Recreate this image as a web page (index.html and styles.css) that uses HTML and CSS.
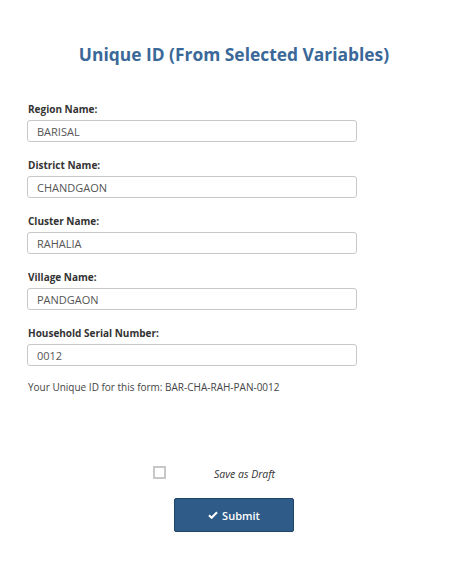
FILE: index.html
```html
<!DOCTYPE html>
<html>
<head>
<meta charset="utf-8">
<link rel="stylesheet" href="styles.css">
</head>
<body>
<div class="page">
  <h1 class="title">Unique ID (From Selected Variables)</h1>
  <form class="form">
    <div class="field">
      <label class="label">Region Name:</label>
      <input class="input" type="text" value="BARISAL">
    </div>
    <div class="field">
      <label class="label">District Name:</label>
      <input class="input" type="text" value="CHANDGAON">
    </div>
    <div class="field">
      <label class="label">Cluster Name:</label>
      <input class="input" type="text" value="RAHALIA">
    </div>
    <div class="field">
      <label class="label">Village Name:</label>
      <input class="input" type="text" value="PANDGAON">
    </div>
    <div class="field">
      <label class="label">Household Serial Number:</label>
      <input class="input" type="text" value="0012">
    </div>
    <p class="result">Your Unique ID for this form: BAR-CHA-RAH-PAN-0012</p>
    <div class="draft">
      <span class="checkbox"></span>
      <span class="draft-label">Save as Draft</span>
    </div>
    <div class="actions">
      <button type="button" class="submit">
        <svg class="check" viewBox="0 0 12 10" width="10" height="8"><path d="M1 5.2 L4.3 8.4 L11 1.6" fill="none" stroke="#fff" stroke-width="2.6" stroke-linejoin="miter"/></svg>
        Submit
      </button>
    </div>
  </form>
</div>
</body>
</html>
```
FILE: styles.css
```css
* { box-sizing: border-box; }
html, body { margin: 0; padding: 0; background: #fff; }
body { font-family: "Open Sans", "Liberation Sans", sans-serif; color: #333; }
.page { padding: 0 22px 0 27px; }
.title {
  margin: 0;
  padding-top: 40px;
  text-align: center;
  font-size: 17.4px;
  font-weight: 700;
  color: #3a6898;
  line-height: 28px;
}
.form { margin-top: 31px; }
.field { display: flex; flex-direction: column; margin-bottom: 13px; }
.label {
  font-size: 10px;
  font-weight: 700;
  color: #333;
  line-height: 16px;
  padding-top: 2px;
  padding-left: 1px;
  margin-bottom: 3px;
}
.input {
  width: 330px;
  height: 22px;
  border: 1px solid #c8c8c8;
  border-radius: 3px;
  padding: 0 9px;
  font-family: "Open Sans", "Liberation Sans", sans-serif;
  font-size: 11px;
  color: #555;
  background: #fff;
}
.result {
  margin: 0;
  padding-top: 1px;
  padding-left: 1px;
  font-size: 10px;
  color: #444;
  line-height: 14px;
}
.draft {
  margin-top: 72px;
  display: flex;
  align-items: center;
  height: 13px;
  padding-left: 126px;
}
.checkbox {
  width: 13px;
  height: 13px;
  border: 2px solid #c8c8c8;
  display: inline-block;
}
.draft-label {
  margin-left: 48px;
  margin-top: 3px;
  font-size: 10.5px;
  line-height: 13px;
  font-style: italic;
  color: #333;
}
.actions { display: flex; justify-content: center; margin-top: 19px; }
.submit {
  width: 120px;
  height: 34px;
  background: #2e5b87;
  border: 1px solid #1f4468;
  border-radius: 2px;
  color: #fff;
  font-family: "Open Sans", "Liberation Sans", sans-serif;
  font-size: 11px;
  font-weight: 600;
  display: flex;
  align-items: center;
  justify-content: center;
  gap: 4px;
}
```
